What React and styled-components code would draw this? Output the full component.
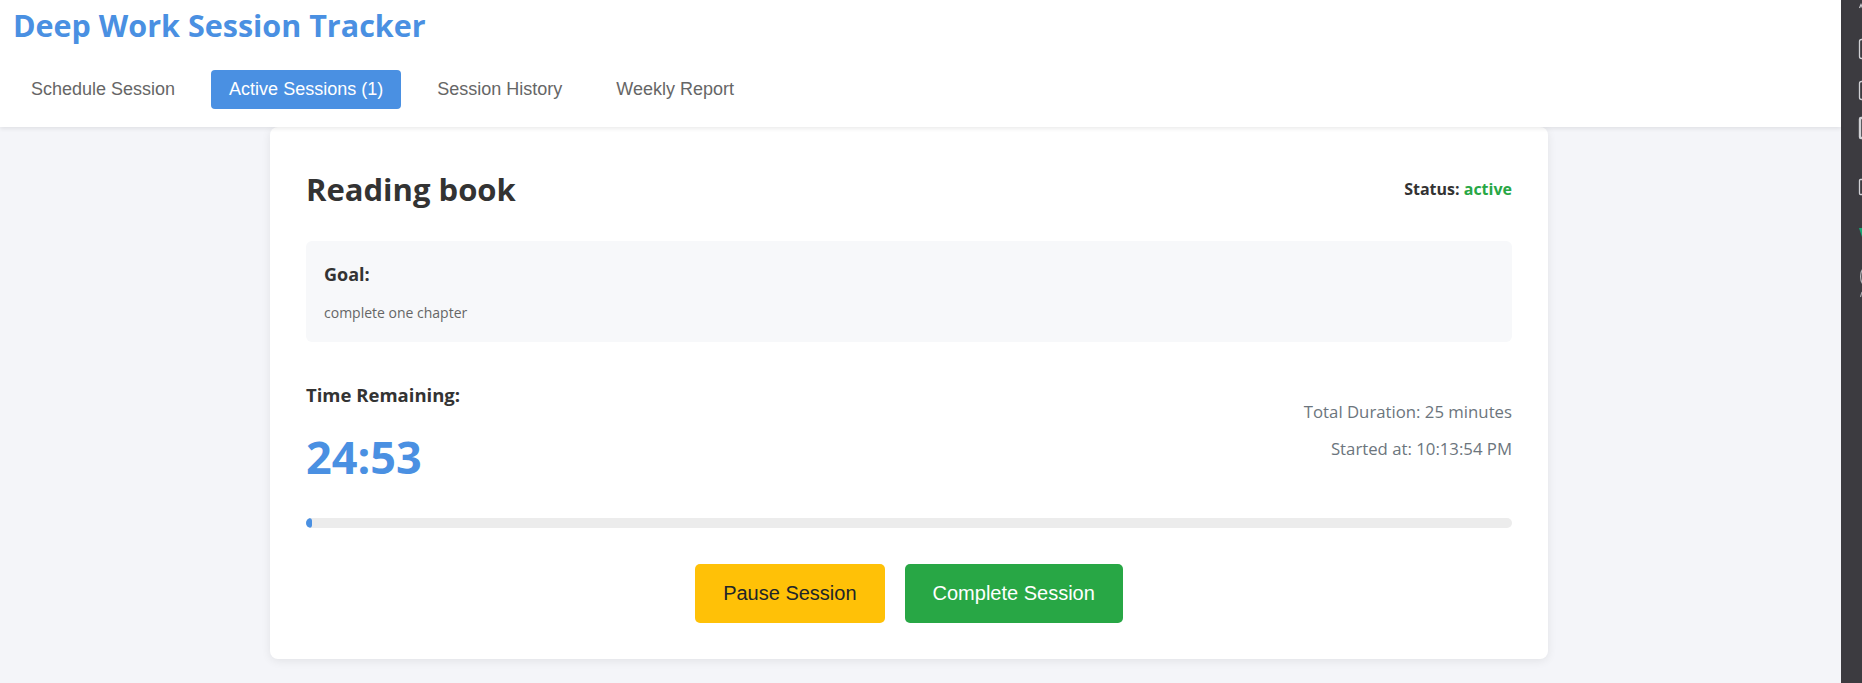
import React from 'react'
import styled, { createGlobalStyle } from 'styled-components'

const GlobalStyle = createGlobalStyle`
   html, body {
      margin: 0;
      padding: 0;
      height: 100%;
      overflow: hidden;
      background: #f4f5f9;
      font-family: 'Open Sans', 'Noto Sans', sans-serif;
   }
`

const tabs = ['Schedule Session', 'Active Sessions (1)', 'Session History', 'Weekly Report']

const session = {
   title: 'Reading book',
   status: 'active',
   goal: 'complete one chapter',
   remaining: '24:53',
   duration: 25,
   startedAt: '10:13:54 PM',
   progress: 0.47,
}

const SideStrip = () => (
   <Strip>
      <svg width="21" height="683" viewBox="0 0 21 683" fill="none">
         <path d="M18.5 8 L20 4.5 L21.5 8" stroke="#c8c8cc" strokeWidth="1.2" />
         <rect x="18.5" y="39.5" width="10" height="19" rx="2" stroke="#d0d0d4" strokeWidth="1.3" />
         <rect x="18.5" y="81.5" width="10" height="18" rx="2" stroke="#d0d0d4" strokeWidth="1.3" />
         <rect x="19" y="118" width="10" height="20" rx="1" stroke="#d0d0d4" strokeWidth="2.4" />
         <rect x="18.5" y="179.5" width="10" height="15" rx="1" stroke="#d0d0d4" strokeWidth="1.3" />
         <path d="M18 228 L24 228 L21 237 Z" fill="#17a673" />
         <path d="M23 268 C18.5 271 18.5 282 23 285" stroke="#b8b8bc" strokeWidth="1.3" />
         <path d="M21 292 L19.5 297" stroke="#a8a8ac" strokeWidth="1.2" />
      </svg>
   </Strip>
)

export default function App() {
   return (
      <Shell>
         <GlobalStyle />
         <Page>
            <Header>
               <Title>Deep Work Session Tracker</Title>
               <Tabs>
                  {tabs.map((t, i) => (
                     <Tab key={t} $active={i === 1}>
                        {t}
                     </Tab>
                  ))}
               </Tabs>
            </Header>
            <Main>
               <Card>
                  <CardHead>
                     <SessionTitle>{session.title}</SessionTitle>
                     <Status>
                        Status: <StatusValue>{session.status}</StatusValue>
                     </Status>
                  </CardHead>
                  <GoalBox>
                     <GoalTitle>Goal:</GoalTitle>
                     <GoalText>{session.goal}</GoalText>
                  </GoalBox>
                  <TimerRow>
                     <div>
                        <TimerLabel>Time Remaining:</TimerLabel>
                        <Timer>{session.remaining}</Timer>
                     </div>
                     <Meta>
                        <MetaLine>Total Duration: {session.duration} minutes</MetaLine>
                        <MetaLine>Started at: {session.startedAt}</MetaLine>
                     </Meta>
                  </TimerRow>
                  <Progress>
                     <ProgressFill style={{ width: `${session.progress}%` }} />
                  </Progress>
                  <Actions>
                     <ActionButton $variant="pause">Pause Session</ActionButton>
                     <ActionButton $variant="complete">Complete Session</ActionButton>
                  </Actions>
               </Card>
            </Main>
         </Page>
         <SideStrip />
      </Shell>
   )
}

const Shell = styled.div`
   display: flex;
   height: 100vh;
`
const Page = styled.div`
   flex: 1;
   min-width: 0;
   display: flex;
   flex-direction: column;
`
const Header = styled.header`
   position: relative;
   z-index: 1;
   background: #ffffff;
   padding: 4px 13px 18px;
   box-shadow: 0 2px 4px rgba(0, 0, 0, 0.08);
`
const Title = styled.h1`
   margin: 0;
   font-size: 30.5px;
   font-weight: 700;
   color: #4a90e2;
`
const Tabs = styled.nav`
   display: flex;
   gap: 18px;
   margin-top: 24px;
`
const Tab = styled.button`
   font-family: 'Liberation Sans', Arial, sans-serif;
   font-size: 18px;
   padding: 9px 18px;
   border: none;
   border-radius: 4px;
   cursor: pointer;
   background: ${(p) => (p.$active ? '#4a90e2' : 'transparent')};
   color: ${(p) => (p.$active ? '#ffffff' : '#666666')};
`
const Main = styled.main`
   flex: 1;
   padding: 0 293px 0 270px;
`
const Card = styled.section`
   background: #ffffff;
   border-radius: 8px;
   padding: 40px 36px 36px;
   box-shadow: 0 2px 10px rgba(0, 0, 0, 0.08);
`
const CardHead = styled.div`
   display: flex;
   justify-content: space-between;
   align-items: center;
   margin-bottom: 30px;
`
const SessionTitle = styled.h2`
   margin: 0;
   font-size: 31px;
   line-height: 44px;
   font-weight: 700;
   color: #333333;
`
const Status = styled.span`
   font-size: 16px;
   font-weight: 700;
   color: #333333;
`
const StatusValue = styled.span`
   color: #28a745;
`
const GoalBox = styled.div`
   background: #f7f8fa;
   border-radius: 6px;
   padding: 21px 18px 20px;
`
const GoalTitle = styled.h4`
   margin: 0 0 17px;
   font-size: 18px;
   font-weight: 700;
   color: #333333;
`
const GoalText = styled.p`
   margin: 0;
   font-size: 14px;
   color: #666666;
`
const TimerRow = styled.div`
   display: flex;
   justify-content: space-between;
   align-items: center;
   margin-top: 40px;
`
const TimerLabel = styled.h4`
   margin: 0;
   font-size: 18.5px;
   font-weight: 700;
   color: #333333;
`
const Timer = styled.div`
   margin-top: 19px;
   font-size: 45px;
   font-weight: 700;
   color: #4a90e2;
`
const Meta = styled.div`
   text-align: right;
   margin-bottom: 10px;
`
const MetaLine = styled.p`
   margin: 0;
   font-size: 16.75px;
   color: #6c757d;

   & + & {
      margin-top: 14px;
   }
`
const Progress = styled.div`
   height: 10px;
   margin-top: 31px;
   border-radius: 5px;
   background: #ececec;
   overflow: hidden;
`
const ProgressFill = styled.div`
   height: 100%;
   min-width: 5px;
   border-radius: 5px;
   background: #4a90e2;
`
const Actions = styled.div`
   display: flex;
   justify-content: center;
   gap: 20px;
   margin-top: 36px;
`
const ActionButton = styled.button`
   font-family: 'Liberation Sans', Arial, sans-serif;
   font-size: 20px;
   padding: 18px 28px;
   border: none;
   border-radius: 5px;
   cursor: pointer;
   background: ${(p) => (p.$variant === 'pause' ? '#ffc107' : '#28a745')};
   color: ${(p) => (p.$variant === 'pause' ? '#212529' : '#ffffff')};
`
const Strip = styled.aside`
   width: 21px;
   flex: none;
   background: #3c3b40;
   overflow: hidden;
`
